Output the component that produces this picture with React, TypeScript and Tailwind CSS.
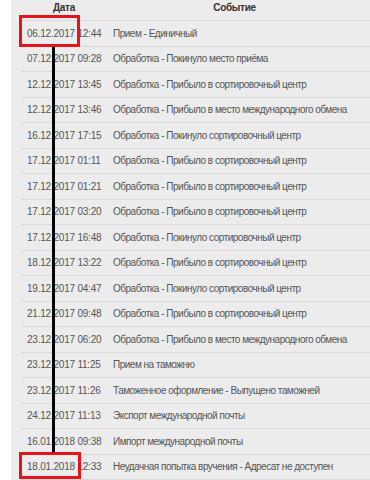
import React from "react";

const rows: [string, string][] = [
  ["06.12.2017 12:44", "Прием - Единичный"],
  ["07.12.2017 09:28", "Обработка - Покинуло место приёма"],
  ["12.12.2017 13:45", "Обработка - Прибыло в сортировочный центр"],
  ["12.12.2017 13:46", "Обработка - Прибыло в место международного обмена"],
  ["16.12.2017 17:15", "Обработка - Покинуло сортировочный центр"],
  ["17.12.2017 01:11", "Обработка - Прибыло в сортировочный центр"],
  ["17.12.2017 01:21", "Обработка - Прибыло в сортировочный центр"],
  ["17.12.2017 03:20", "Обработка - Прибыло в сортировочный центр"],
  ["17.12.2017 16:48", "Обработка - Покинуло сортировочный центр"],
  ["18.12.2017 13:22", "Обработка - Прибыло в сортировочный центр"],
  ["19.12.2017 04:47", "Обработка - Покинуло сортировочный центр"],
  ["21.12.2017 09:48", "Обработка - Прибыло в сортировочный центр"],
  ["23.12.2017 06:20", "Обработка - Прибыло в место международного обмена"],
  ["23.12.2017 11:25", "Прием на таможню"],
  ["23.12.2017 11:26", "Таможенное оформление - Выпущено таможней"],
  ["24.12.2017 11:13", "Экспорт международной почты"],
  ["16.01.2018 09:38", "Импорт международной почты"],
  ["18.01.2018 12:33", "Неудачная попытка вручения - Адресат не доступен"],
];

export default function App() {
  return (
    <div
      className="relative w-[370px] h-[480px] overflow-hidden bg-white text-[#555]"
      style={{ fontFamily: '"Liberation Sans", Arial, sans-serif' }}
    >
      <div className="ml-[11px] h-full bg-[#ececec] pl-[10px]">
        <div className="flex h-[21px] border-b border-[#dadada] text-[10px] font-bold text-[#333] leading-[16px] tracking-[-0.3px]">
          <div className="w-[86px] text-center">Дата</div>
          <div className="flex-1 text-center pr-[8px]">Событие</div>
        </div>
        {rows.map(([d, e], i) => (
          <div
            key={i}
            className="flex items-center h-[25.5px] border-b border-[#dadada] text-[10px] whitespace-nowrap"
          >
            <div className="w-[92px] pl-[6px] tracking-[-0.22px]">{d}</div>
            <div className="flex-1 tracking-[-0.5px]">{e}</div>
          </div>
        ))}
      </div>
      {/* red highlight boxes */}
      <div className="absolute left-[19px] top-[15px] w-[61px] h-[32px] border-[3px] border-[#e8121b]" />
      <div className="absolute left-[19px] top-[452px] w-[62px] h-[27px] border-[3px] border-[#e8121b]" />
      {/* connecting line */}
      <div className="absolute left-[52px] top-[47px] w-[3px] h-[405px] bg-black" />
    </div>
  );
}
